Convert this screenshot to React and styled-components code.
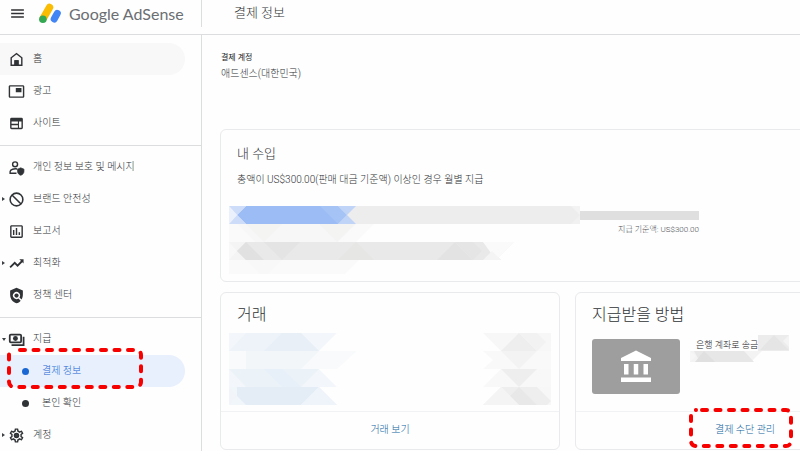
import React, { useState } from "react";
import styled, { createGlobalStyle, css } from "styled-components";
import {
	MdAccountBalance,
	MdMenu,
	MdOutlineAssessment,
	MdOutlineSettings,
	MdPictureInPicture,
	MdPolicy,
} from "react-icons/md";

const HomeIcon = () => (
	<svg viewBox='0 0 24 24' fill='currentColor'>
		<path d='M5.500 19h3.500v-6h6v6h3.500v-9L12 5l-6.500 5v9zM3.500 21V9L12 2.500 20.500 9v12h-17z' />
		<path d='M9 13h6v7H9z' />
	</svg>
);

const SiteIcon = () => (
	<svg viewBox='0 0 24 24' fill='currentColor'>
		<path d='M19 4H5a2 2 0 0 0-2 2v12a2 2 0 0 0 2 2h14a2 2 0 0 0 2-2V6a2 2 0 0 0-2-2zm-5 14H5v-3.500h9V18zm0-5.500H5V9h9v3.500zm5 5.500h-3.500V9H19v9z' />
	</svg>
);

const PrivacyIcon = () => (
	<svg viewBox='0 0 24 24' fill='none' stroke='currentColor' strokeWidth='2'>
		<circle cx='10' cy='7.500' r='3.500' />
		<path d='M13 14.200c-4-1-10 .6-10 3.300V20h9' />
		<path
			d='M18 12.500l4.500 1.800v3.200c0 2.500-1.800 4.600-4.500 5.500-2.700-.9-4.500-3-4.500-5.500v-3.200z'
			fill='currentColor'
			strokeWidth='1'
		/>
	</svg>
);

const BlockIcon = () => (
	<svg viewBox='0 0 24 24' fill='none' stroke='currentColor' strokeWidth='2.200'>
		<circle cx='12' cy='12' r='9' />
		<path d='M5.600 5.600l12.800 12.800' />
	</svg>
);

const TrendIcon = () => (
	<svg viewBox='0 0 24 24' fill='none' stroke='currentColor' strokeWidth='2.600'>
		<path d='M3 17.500l6.500-6.500 4 4L20 8.500' />
		<path d='M16 6h6v6z' fill='currentColor' stroke='none' />
	</svg>
);

const PaymentsIcon = () => (
	<svg viewBox='0 0 24 24' fill='none' stroke='currentColor' strokeWidth='2.500'>
		<rect x='2.500' y='5' width='16' height='11' rx='1.500' />
		<path d='M22 8v12H5' />
		<circle cx='10.500' cy='10.500' r='3.500' fill='currentColor' stroke='none' />
	</svg>
);

const SettingsIcon = () => (
	<SettingsWrapper>
		<MdOutlineSettings />
	</SettingsWrapper>
);

const LogoMark = () => (
	<svg width='24' height='22' viewBox='0 0 24 22'>
		<path d='M10.500 5.500L4.500 16' stroke='#fbbc04' strokeWidth='7.500' strokeLinecap='round' />
		<path d='M18.300 11.300L15.200 17' stroke='#4285f4' strokeWidth='7' strokeLinecap='round' />
		<circle cx='3.900' cy='17.300' r='3.800' fill='#34a853' />
	</svg>
);

const menuGroups = [
	[
		{ id: "home", label: "홈", icon: <HomeIcon />, hovered: true },
		{ id: "ads", label: "광고", icon: <MdPictureInPicture /> },
		{ id: "sites", label: "사이트", icon: <SiteIcon /> },
	],
	[
		{ id: "privacy", label: "개인 정보 보호 및 메시지", icon: <PrivacyIcon /> },
		{ id: "brand", label: "브랜드 안전성", icon: <BlockIcon />, arrow: "right" },
		{ id: "reports", label: "보고서", icon: <MdOutlineAssessment /> },
		{ id: "optimize", label: "최적화", icon: <TrendIcon />, arrow: "right" },
		{ id: "policy", label: "정책 센터", icon: <MdPolicy /> },
	],
	[
		{ id: "payments", label: "지급", icon: <PaymentsIcon />, arrow: "down" },
		{ id: "info", label: "결제 정보", sub: true, marked: true },
		{ id: "verify", label: "본인 확인", sub: true },
		{ id: "account", label: "계정", icon: <SettingsIcon />, arrow: "right" },
	],
];

// each shape is [fill, points]
const earningShapes = [
	["#ededed", "0,0 351,0 351,18 0,18"],
	["#9bbcf4", "17,0 109,0 118,9 109,18 17,18 8,9"],
	["#a5c3f5", "100,0 109,0 118,9 109,18 91,0"],
	["#ccdcf9", "0,0 17,0 8,9"],
	["#ccdcf9", "0,18 17,18 8,9"],
	["#eaf1fd", "0,0 8,9 0,18"],
	["#c0d4f8", "109,0 127,0 118,9"],
	["#c0d4f8", "109,18 127,18 118,9"],
	["#f3f3f3", "342,0 351,0 351,9"],
	["#f1f1f1", "342,18 351,9 351,18"],
	["#fafafa", "0,18 145,18 127,36 0,36"],
	["#f7f7f7", "8,18 127,18 109,36 26,36"],
	["#f4f4f3", "17,18 53,18 35,36"],
	["#f4f4f3", "90,18 126,18 108,36"],
	["#fafafa", "0,18 9,27 0,36"],
	["#f4f4f4", "0,36 285,36 267,54 0,54"],
	["#e9e9e9", "17,36 254,36 272,54 17,54 8,45"],
	["#e1e1e1", "17,36 35,54 17,54 8,45"],
	["#e4e4e4", "35,36 71,36 53,54"],
	["#e6e6e4", "127,36 145,54 109,54"],
	["#e3e3e3", "226,36 244,54 208,54"],
	["#e5e5e5", "226,36 244,36 253,45 244,54"],
	["#fafafa", "285,36 267,54 254,36"],
	["#f4f4f4", "263,45 272,54 254,54"],
	["#f8f8f8", "0,36 8,45 0,54"],
	["#fafafa", "0,54 130,54 116,68 0,68"],
	["#f8f8f8", "17,54 53,54 39,68 31,68"],
];

const accountShapes = [
	["#f3f7fb", "0,0 108,0 90,18 108,36 90,36 108,54 0,54"],
	["#edf3f8", "17,0 72,0 90,18 17,18 0,18"],
	["#e8eff7", "53,0 72,0 90,18 35,18"],
	["#f8fafb", "0,18 128,18 108,36 0,36"],
	["#f2f6f9", "17,18 90,18 72,36 17,36"],
	["#ebf2f8", "0,36 90,36 72,54 17,54"],
	["#e7eff8", "35,36 53,36 72,54 53,54"],
	["#f1f6fa", "0,54 90,54 108,72 0,72"],
	["#e4edf5", "8,54 90,54 72,72 17,72 8,63"],
	["#f1f5fa", "0,54 8,63 0,72"],
	["#eef4f9", "90,54 108,72 72,72"],
];

const amountShapes = [
	["#f7f7f7", "0,0 68,0 68,18 18,18"],
	["#eeeeee", "36,0 54,18 18,18"],
	["#f2f2f2", "36,0 54,0 63,9 54,18"],
	["#f9f9f9", "0,18 68,18 68,36 0,36 10,27"],
	["#f3f3f3", "18,18 54,18 36,36"],
	["#f8f8f8", "18,36 68,36 68,54 0,54"],
	["#eeeeee", "18,36 54,36 36,54"],
	["#f7f7f7", "18,54 68,54 68,72 0,72"],
	["#eeeeee", "18,54 54,54 68,68 64,72 18,72 36,72"],
	["#e8e8e8", "36,54 54,72 36,72 27,63"],
	["#f4f4f4", "18,54 36,72 0,72"],
];

const bankShapes = [
	["#ececec", "68,0 99,0 99,16 68,16"],
	["#e5e5e5", "84,0 99,15 70,15"],
	["#f4f4f4", "93,6 99,0 99,12"],
	["#f3f3f3", "0,16 72,16 61,27 0,27"],
	["#e7e7e7", "4,16 54,16 64,27 10,27"],
	["#e0e0e0", "14,16 25,27 5,27"],
	["#f6f6f6", "0,16 6,21 0,27"],
];

const Mosaic = ({ width, height, shapes }) => (
	<MosaicSvg width={width} height={height} viewBox={`0 0 ${width} ${height}`}>
		{shapes.map(([fill, points], i) => (
			<polygon key={i} fill={fill} points={points} />
		))}
	</MosaicSvg>
);

const Marker = ({ width, height, place }) => (
	<MarkerSvg width={width} height={height} $place={place}>
		<rect
			x='2'
			y='2'
			width={width - 4}
			height={height - 4}
			rx='5'
			fill='none'
			stroke='#f60000'
			strokeWidth='4'
			strokeLinecap='round'
			strokeDasharray='5 8.500'
			strokeDashoffset='-6'
		/>
	</MarkerSvg>
);

const App = () => {
	const [active, setActive] = useState("info");

	return (
		<Page>
			<GlobalStyle />
			<Header>
				<Brand>
					<MenuButton type='button' aria-label='메뉴'>
						<MdMenu />
					</MenuButton>
					<LogoMark />
					<BrandName>Google AdSense</BrandName>
				</Brand>
				<PageTitle>결제 정보</PageTitle>
			</Header>
			<Body>
				<Sidebar>
					{menuGroups.map((group, i) => (
						<MenuGroup key={i}>
							{group.map((item) => (
								<MenuItem
									key={item.id}
									href={`#${item.id}`}
									onClick={() => setActive(item.id)}
									$active={active === item.id}
									$hovered={item.hovered}
								>
									<Arrow $direction={item.arrow} />
									<ItemIcon $sub={item.sub}>{item.sub ? <Dot /> : item.icon}</ItemIcon>
									{item.label}
									{item.marked && (
										<Marker width={136} height={41} place='top: -7px; left: 7px;' />
									)}
								</MenuItem>
							))}
						</MenuGroup>
					))}
				</Sidebar>
				<Main>
					<AccountLabel>결제 계정</AccountLabel>
					<AccountName>애드센스(대한민국)</AccountName>
					<Cards>
						<EarningsCard>
							<CardTitle $small>내 수입</CardTitle>
							<Description>
								총액이 US$300.00(판매 대금 기준액) 이상인 경우 월별 지급
							</Description>
							<Meter>
								<Mosaic width={351} height={68} shapes={earningShapes} />
								<Threshold>
									<Rail />
									<ThresholdText>지급 기준액: US$300.00</ThresholdText>
								</Threshold>
							</Meter>
						</EarningsCard>
						<Card>
							<CardTitle>거래</CardTitle>
							<Transactions>
								<Mosaic width={128} height={72} shapes={accountShapes} />
								<Mosaic width={68} height={72} shapes={amountShapes} />
							</Transactions>
							<CardFooter>
								<FooterLink href='#transactions'>거래 보기</FooterLink>
							</CardFooter>
						</Card>
						<Card>
							<CardTitle>지급받을 방법</CardTitle>
							<Method>
								<BankTile>
									<MdAccountBalance />
								</BankTile>
								<BankInfo>
									<BankText>은행 계좌로 송금</BankText>
									<BankMask>
										<Mosaic width={99} height={27} shapes={bankShapes} />
									</BankMask>
								</BankInfo>
							</Method>
							<CardFooter>
								<FooterLink href='#methods'>
									결제 수단 관리
									<Marker width={104} height={40} place='top: -14px; left: -26px;' />
								</FooterLink>
							</CardFooter>
						</Card>
					</Cards>
				</Main>
			</Body>
		</Page>
	);
};

export default App;

const GlobalStyle = createGlobalStyle`
	* {
		box-sizing: border-box;
	}

	body {
		margin: 0;
		background: #fefefe;
		color: #303336;
		font-family: Roboto, "Noto Sans CJK KR", sans-serif;
		font-size: 10px;
		font-weight: 300;
		line-height: 16px;
	}

	a {
		text-decoration: none;
	}
`;

const Page = styled.div`
	display: flex;
	flex-direction: column;
	min-height: 100vh;
	overflow: hidden;
`;

const Header = styled.header`
	display: flex;
	height: 35px;
	border-bottom: 1px solid #dcdddf;
`;

const Brand = styled.div`
	display: flex;
	align-items: center;
	width: 202px;
	height: 27px;
	padding-left: 9px;
	border-right: 1px solid #dcdddf;

	> svg {
		flex: none;
		margin: 0 6px 2px 13px;
	}
`;

const MenuButton = styled.button`
	display: flex;
	padding: 0;
	border: 0;
	background: none;
	color: #303134;
	font-size: 17px;
	cursor: pointer;
`;

const BrandName = styled.span`
	color: #6b6e72;
	font-family: Lato, sans-serif;
	font-size: 16px;
	font-weight: 400;
	line-height: 24px;
	white-space: nowrap;
`;

const PageTitle = styled.h1`
	margin: 3px 0 0 32px;
	font-size: 13px;
	font-weight: 300;
	line-height: 20px;
`;

const Body = styled.div`
	display: flex;
	flex: 1;
`;

const Sidebar = styled.nav`
	flex: none;
	width: 202px;
	padding-top: 8px;
	border-right: 1px solid #dcdddf;
`;

const MenuGroup = styled.div`
	& + & {
		margin-top: 6px;
		padding-top: 5px;
		border-top: 1px solid #dcdddf;
	}
`;

const MenuItem = styled.a`
	position: relative;
	display: flex;
	align-items: center;
	height: 32px;
	margin-right: 16px;
	border-radius: 0 16px 16px 0;
	color: #303336;

	${({ $hovered }) => $hovered && css`
		background: #f8f8f8;
	`}

	${({ $active }) => $active && css`
		background: #e8f0fe;
		color: #1967d2;
	`}
`;

const Arrow = styled.span`
	width: 8px;

	&::before {
		content: "";
		display: block;
		width: 0;
		margin-left: 2px;
		border: 2px solid transparent;
		${({ $direction }) => $direction === "right" && css`
			border-left: 3px solid #3c4043;
			border-right: 0;
		`}
		${({ $direction }) => $direction === "down" && css`
			border-top: 3px solid #3c4043;
			border-bottom: 0;
		`}
	}
`;

const ItemIcon = styled.span`
	display: flex;
	justify-content: center;
	width: ${({ $sub }) => ($sub ? "34px" : "25px")};
	padding-right: ${({ $sub }) => ($sub ? "0" : "8px")};

	svg {
		flex: none;
		width: 17px;
		height: 17px;
	}
`;

const SettingsWrapper = styled.span`
	display: flex;
	border-radius: 50%;
	background: radial-gradient(circle, #3c4043 2px, transparent 3px);
`;

const Dot = styled.span`
	width: 7px;
	height: 7px;
	border-radius: 50%;
	background: currentColor;
`;

const MarkerSvg = styled.svg`
	position: absolute;
	pointer-events: none;
	${({ $place }) => $place}
`;

const Main = styled.main`
	flex: 1;
	min-width: 0;
	padding: 15px 18px 0;
	overflow: hidden;
`;

const AccountLabel = styled.div`
	padding-left: 1px;
	color: #202124;
	font-size: 8px;
	font-weight: 400;
`;

const AccountName = styled.div`
	padding-left: 1px;
`;

const Cards = styled.div`
	display: grid;
	grid-template-columns: repeat(2, minmax(340px, 1fr));
	gap: 10px 15px;
	margin-top: 47px;
`;

const Card = styled.section`
	border: 1px solid #e9eaeb;
	border-radius: 6px;
	padding: 12px 8px 0;
`;

const EarningsCard = styled(Card)`
	grid-column: 1 / -1;
	padding-bottom: 7px;
`;

const CardTitle = styled.h2`
	margin: 0 8px;
	font-size: ${({ $small }) => ($small ? "13px" : "16px")};
	font-weight: 300;
	line-height: ${({ $small }) => ($small ? "24px" : "20px")};
`;

const Description = styled.p`
	margin: 6px 8px 18px;
`;

const Meter = styled.div`
	display: flex;
`;

const MosaicSvg = styled.svg`
	display: block;
	flex: none;
`;

const Threshold = styled.div`
	width: 119px;
	padding-top: 5px;
`;

const Rail = styled.div`
	height: 9px;
	background: #dfdfdf;
`;

const ThresholdText = styled.div`
	color: #4d5156;
	font-size: 8px;
	line-height: 20px;
	text-align: right;
`;

const Transactions = styled.div`
	display: flex;
	justify-content: space-between;
	height: 86px;
	padding-top: 8px;
`;

const Method = styled.div`
	display: flex;
	height: 86px;
	padding: 14px 8px 0;
`;

const BankTile = styled.div`
	display: flex;
	align-items: center;
	justify-content: center;
	width: 88px;
	height: 55px;
	border-radius: 3px;
	background: #9e9e9e;
	color: #fff;
	font-size: 36px;
`;

const BankInfo = styled.div`
	position: relative;
	padding-left: 16px;
`;

const BankText = styled.div`
	color: #202124;
	font-size: 9px;
	line-height: 12px;
`;

const BankMask = styled.div`
	position: absolute;
	top: -4px;
	left: 10px;
`;

const CardFooter = styled.div`
	display: flex;
	justify-content: center;
	margin: 0 -8px;
	padding: 10px 0 11px;
	border-top: 1px solid #f1f2f3;
`;

const FooterLink = styled.a`
	position: relative;
	color: #0f64a0;
`;
